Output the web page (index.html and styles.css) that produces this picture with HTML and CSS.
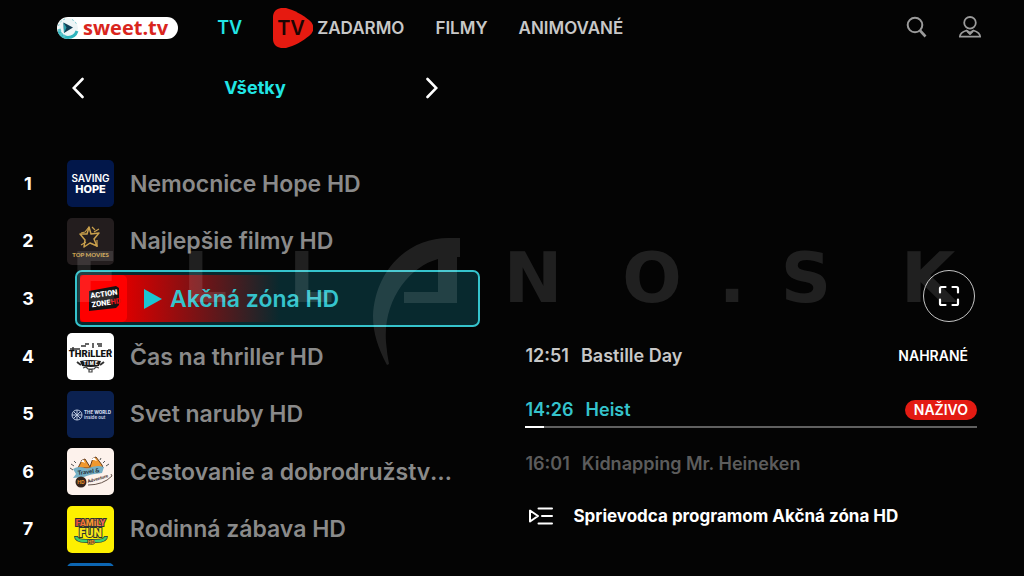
FILE: index.html
```html
<!DOCTYPE html>
<html lang="sk">
<head>
<meta charset="utf-8">
<meta name="viewport" content="width=device-width, initial-scale=1">
<title>sweet.tv</title>
<link rel="stylesheet" href="styles.css">
</head>
<body>
<header class="header">
  <a class="brand" href="#" aria-label="sweet.tv">
    <svg class="brand-disc" viewBox="0 0 22 22" aria-hidden="true">
      <circle cx="11" cy="11" r="10" fill="#eef5f6"/>
      <path d="M2 14a9.500 9.500 0 0 0 18 0" fill="none" stroke="#2fb4bd" stroke-width="3"/>
      <path d="M1.500 9A9.500 9.500 0 0 1 8 2M15 2.500a9.500 9.500 0 0 1 5 6" fill="none" stroke="#7dcdd2" stroke-width="1" stroke-dasharray="2 2"/>
      <path d="M2 12l2 5 4 3" fill="none" stroke="#57c4ca" stroke-width="3" stroke-dasharray="3 1"/>
      <path d="M6.500 5.500l9.500 5-9 5.500z" fill="#103e55"/>
      <path d="M6.500 5.500l3 5-2.500 5.500z" fill="#2a9eaa"/>
    </svg>
    <span class="brand-name">sweet.tv</span>
  </a>
  <nav class="menu">
    <a class="menu-link menu-link-active" href="#">TV</a>
    <a class="menu-link menu-free" href="#">
      <span class="free-badge">
        <svg class="free-shape" viewBox="0 0 40 40" aria-hidden="true">
          <path d="M0 9C0 2 6-1 13 0c8 2 17 7 23 12 6 5 6 11 0 16-6 5-15 10-23 12C6 41 0 38 0 31z" fill="#e61a10"/>
        </svg>
        <span class="free-text">TV</span>
      </span>
      <span>ZADARMO</span>
    </a>
    <a class="menu-link" href="#">FILMY</a>
    <a class="menu-link" href="#">ANIMOVANÉ</a>
  </nav>
  <div class="tools">
    <button class="icon-button" type="button" aria-label="Hľadať">
      <svg class="tool-icon" viewBox="0 0 24 24" fill="none" stroke="#9b9b9b" stroke-width="2">
        <circle cx="10" cy="9" r="7.300"/><path d="M15 14.500l5.500 6" stroke-width="2.600"/>
      </svg>
    </button>
    <button class="icon-button" type="button" aria-label="Profil">
      <svg class="tool-icon" viewBox="0 0 24 24" fill="none" stroke="#9b9b9b" stroke-width="1.800" stroke-linejoin="round">
        <circle cx="12" cy="6.800" r="5.800"/>
        <path d="M8.500 14.500C5 15.500 2 17.500 1.800 20.700h20.400c-.2-3.200-3.200-5.200-6.700-6.200L12 16.800z"/>
        <path d="M9 15l3 3 3-3"/>
      </svg>
    </button>
  </div>
</header>

<div class="category">
  <button class="icon-button" type="button" aria-label="Predchádzajúca kategória">
    <svg class="chevron" viewBox="0 0 12 22" fill="none" stroke="#fff" stroke-width="2.600" stroke-linecap="round"><path d="M10.500 2L1.700 11l8.800 9"/></svg>
  </button>
  <span class="category-name">Všetky</span>
  <button class="icon-button" type="button" aria-label="Ďalšia kategória">
    <svg class="chevron" viewBox="0 0 12 22" fill="none" stroke="#fff" stroke-width="2.600" stroke-linecap="round"><path d="M1.500 2l8.800 9-8.800 9"/></svg>
  </button>
</div>

<main class="content">
  <ol class="channels">
    <li class="row">
      <span class="number">1</span>
      <button class="channel" type="button">
        <svg class="tile" viewBox="0 0 47 47" aria-hidden="true">
          <rect width="47" height="47" fill="#02174a"/>
          <text class="tile-hope" x="23.500" y="22" font-size="10" font-weight="600">SAVING</text>
          <text class="tile-hope" x="23.500" y="33" font-size="11" font-weight="800">HOPE</text>
        </svg>
        <span class="name">Nemocnice Hope HD</span>
      </button>
    </li>
    <li class="row">
      <span class="number">2</span>
      <button class="channel" type="button">
        <svg class="tile" viewBox="0 0 47 47" aria-hidden="true">
          <rect width="47" height="47" fill="#231d1e"/>
          <g fill="none" stroke="#c9a04c" stroke-width="1.500" stroke-linejoin="round">
            <path d="M22 9l2 7 8-1-5 6 3 7-7-3-6 4 1-7-5-6 7 0z"/>
            <path d="M22 9l-4 5-4 1M32 11l-5 3M30 29l0-7M14 27l5-3M25 9l3 3" stroke-width="1.200"/>
          </g>
          <text x="23.500" y="39" fill="#c9a04c" font-family="Lato" font-size="6" font-weight="900" text-anchor="middle">TOP MOVIES</text>
        </svg>
        <span class="name">Najlepšie filmy HD</span>
      </button>
    </li>
    <li class="row">
      <span class="number">3</span>
      <button class="channel channel-selected" type="button" aria-current="true">
        <svg class="tile" viewBox="0 0 47 47" aria-hidden="true">
          <rect width="47" height="47" fill="#fe0000"/>
          <path d="M9 16l27-5 3 2v17l-3 3-27 3z" fill="#151314"/>
          <g transform="rotate(-8 24 24)" font-family="Roboto" font-weight="900" font-size="7.500">
            <text x="11" y="21.500" fill="#fff">ACTION</text>
            <text x="11" y="30.500" fill="#fff">ZONE<tspan fill="#e0161b">HD</tspan></text>
          </g>
        </svg>
        <svg class="play" viewBox="0 0 18 20" aria-hidden="true"><path d="M0 0l18 10L0 20z" fill="#1bc6d2"/></svg>
        <span class="name">Akčná zóna HD</span>
      </button>
    </li>
    <li class="row">
      <span class="number">4</span>
      <button class="channel" type="button">
        <svg class="tile" viewBox="0 0 47 47" aria-hidden="true">
          <rect width="47" height="47" fill="#fff"/>
          <text x="23.500" y="24" fill="#111" font-family="Roboto" font-size="9.500" font-weight="900" text-anchor="middle">THRiLLER</text>
          <path d="M3 16h10M6 14v3M14 13h5M18 11h4M26 10v5M30 11h5M31 13h4M41 17h3" stroke="#333" stroke-width="1.500"/>
          <path d="M13 28q10-2 21 0l-2 5q-8 2-17 0z" fill="#191919"/>
          <path d="M10 29l4 3M37 29l-4 3" stroke="#333" stroke-width="2"/>
          <text x="23.500" y="32" fill="#fff" font-family="Roboto" font-size="4.500" font-weight="900" text-anchor="middle">T I M E</text>
          <path d="M16 35l3-1 2 2h6l2-2 3 1M22 37l3-1v3h-3z" fill="none" stroke="#444" stroke-width="1.200"/>
        </svg>
        <span class="name">Čas na thriller HD</span>
      </button>
    </li>
    <li class="row">
      <span class="number">5</span>
      <button class="channel" type="button">
        <svg class="tile" viewBox="0 0 47 47" aria-hidden="true">
          <rect width="47" height="47" fill="#0b2150"/>
          <g fill="none" stroke="#b9c6de" stroke-width="1"><circle cx="10" cy="24" r="5"/><path d="M5 24h10M10 19v10M6.500 20.500l7 7M13.500 20.500l-7 7"/></g>
          <g fill="#ced7e8" font-family="Inter" font-size="4.500"><text x="17" y="23" font-weight="800">THE WORLD</text><text x="17" y="28">inside out</text></g>
        </svg>
        <span class="name">Svet naruby HD</span>
      </button>
    </li>
    <li class="row">
      <span class="number">6</span>
      <button class="channel" type="button">
        <svg class="tile" viewBox="0 0 47 47" aria-hidden="true">
          <rect width="47" height="47" fill="#fdf2ec"/>
          <path d="M11 20l4-8 3-1 5 8 3-9 3-1 6 8 1 3z" fill="#f0982e" stroke="#633c20" stroke-width="1"/>
          <path d="M14 14l2-3 2 4-2-1zM24 12l3-3 3 4-3-1z" fill="#fff"/>
          <path d="M6 21q6-4 14 0 9-5 17-2l-2 6q-12 1-18 4l-11 1 3-4z" fill="#75afc5"/>
          <path d="M3 20l3 2M4 16l3 2M7 13l2 2M36 15l2-2M39 18l3-2M33 12l1-2" stroke="#555" stroke-width="1"/>
          <text x="11" y="27" transform="rotate(-7 11 27)" fill="#25313a" font-family="Lato" font-size="6" font-weight="900">Travel &amp;</text>
          <circle cx="14" cy="34" r="5.500" fill="#35231a"/>
          <text x="14" y="36" fill="#ec942a" font-family="Inter" font-size="5" font-weight="700" text-anchor="middle">HD</text>
          <text x="21" y="35" transform="rotate(-16 21 35)" fill="#35231a" font-family="Lato" font-size="4.500" font-weight="900">Adventure</text>
          <path d="M21 37q15 0 24-9l-1-2" fill="none" stroke="#66544b" stroke-width="1"/>
        </svg>
        <span class="name">Cestovanie a dobrodružstvo HD</span>
      </button>
    </li>
    <li class="row">
      <span class="number">7</span>
      <button class="channel" type="button">
        <svg class="tile" viewBox="0 0 47 47" aria-hidden="true">
          <defs><linearGradient id="family"><stop offset="0" stop-color="#ef453c"/><stop offset=".5" stop-color="#f9a02c"/><stop offset="1" stop-color="#ef5b64"/></linearGradient></defs>
          <rect width="47" height="47" fill="#fdf000"/>
          <path d="M9 30q0 5 10 5h10q10 0 10-5" fill="none" stroke="#36483c" stroke-width="4"/>
          <path d="M9 31q1 4 10 4h10q9 0 10-4" fill="none" stroke="#3ed06e" stroke-width="2.500"/>
          <g font-family="Roboto" font-weight="900" stroke="#2d3430" stroke-width="2" paint-order="stroke" text-anchor="middle">
            <text x="23.500" y="20" fill="url(#family)" font-size="9">FAMiLY</text>
            <text x="23.500" y="31" fill="#f6e51c" font-size="12">FUN</text>
            <text x="24" y="38" fill="#f59b25" font-size="5" stroke-width="1">HD</text>
          </g>
        </svg>
        <span class="name">Rodinná zábava HD</span>
      </button>
    </li>
    <li class="row">
      <span class="number"></span>
      <button class="channel" type="button" aria-label="Ďalší kanál">
        <svg class="tile" viewBox="0 0 47 47" aria-hidden="true"><rect width="47" height="47" fill="#0d66b2"/></svg>
      </button>
    </li>
  </ol>

  <section class="guide">
    <button class="fullscreen" type="button" aria-label="Celá obrazovka">
      <svg class="fullscreen-icon" viewBox="0 0 22 22" fill="none" stroke="#fff" stroke-width="2.200" stroke-linecap="round" stroke-linejoin="round">
        <path d="M2 7.500V3.500Q2 2 3.500 2h4M14.500 2h4Q20 2 20 3.500v4M20 14.500v4q0 1.500-1.500 1.500h-4M7.500 20h-4Q2 20 2 18.500v-4"/>
      </svg>
    </button>
    <ul class="programs">
      <li class="program">
        <div class="program-line"><time>12:51</time><span>Bastille Day</span><span class="recorded">NAHRANÉ</span></div>
      </li>
      <li class="program program-live">
        <div class="program-line"><time>14:26</time><span>Heist</span><span class="live">NAŽIVO</span></div>
        <div class="progress" role="progressbar" aria-label="Heist" aria-valuemin="0" aria-valuemax="100" aria-valuenow="4"><div class="progress-value" style="width: 4%"></div></div>
      </li>
      <li class="program program-next">
        <div class="program-line"><time>16:01</time><span>Kidnapping Mr. Heineken</span></div>
      </li>
    </ul>
    <a class="guide-link" href="#">
      <svg class="guide-icon" viewBox="0 0 24 18" fill="none" stroke="#fff" stroke-width="2" stroke-linecap="round" stroke-linejoin="round">
        <path d="M1 3.500v11l8-5.500zM9.500 1.500H23M13 9h10M9.500 16.500H23"/>
      </svg>
      <span>Sprievodca programom Akčná zóna HD</span>
    </a>
  </section>
</main>

<div class="watermark" aria-hidden="true">
  <span>E</span><span>L</span><span>L</span>
  <svg class="swoosh" viewBox="0 0 90 128">
    <path d="M87 0v19h-3v46H31V54h34V21C36 29 10 62 13 104q1 12 3 22l-2 1C5 110 0 95 0 78 2 34 33 0 76 0z"/>
  </svg>
  <span>N</span><span>O</span><span>.</span><span>S</span><span>K</span>
</div>
</body>
</html>
```
FILE: styles.css
```css
* {
  box-sizing: border-box;
}

body {
  display: flex;
  flex-direction: column;
  height: 100vh;
  margin: 0;
  overflow: hidden;
  background: #040404;
  color: #fff;
  font-family: Inter, "Liberation Sans", sans-serif;
  font-size: 18px;
  font-weight: 600;
  line-height: 24px;
}

a {
  color: inherit;
  text-decoration: none;
}

button {
  padding: 0;
  border: 0;
  background: none;
  color: inherit;
  font: inherit;
  text-align: left;
  cursor: pointer;
}

svg {
  display: block;
  flex: none;
}

ol,
ul {
  margin: 0;
  padding: 0;
  list-style: none;
}

.header {
  display: flex;
  flex: none;
  align-items: center;
  height: 55px;
  padding: 0 42px 0 57px;
}

.brand {
  display: flex;
  align-items: center;
  gap: 4px;
  height: 22px;
  padding-right: 10px;
  border-radius: 11px;
  background: #fff;
}

.brand-disc {
  width: 22px;
  height: 22px;
}

.brand-name {
  color: #d9251d;
  font-family: "Open Sans", sans-serif;
  font-size: 20px;
  font-weight: 700;
  line-height: 22px;
}

.menu {
  display: flex;
  align-items: center;
  gap: 31px;
  margin-left: 39px;
  color: #c8c8c8;
  font-size: 17px;
}

.menu-link-active {
  color: #21e6e6;
  font-size: 18px;
}

.menu-free {
  display: flex;
  align-items: center;
  gap: 4px;
}

.free-badge {
  display: grid;
  align-items: center;
}

.free-shape,
.free-text {
  grid-area: 1 / 1;
}

.free-shape {
  width: 40px;
  height: 40px;
}

.free-text {
  padding-left: 4px;
  color: #1c0503;
  font-size: 20px;
}

.tools {
  display: flex;
  gap: 29px;
  margin-left: auto;
}

.tool-icon {
  width: 24px;
  height: 24px;
}

.category {
  display: flex;
  flex: none;
  align-items: center;
  justify-content: space-between;
  width: 366px;
  height: 66px;
  margin: 0 0 34px 72px;
}

.category-name {
  color: #21e6e6;
  font-weight: 700;
}

.chevron {
  width: 12px;
  height: 22px;
}

.content {
  display: grid;
  flex: 1;
  grid-template-columns: minmax(0, 481fr) minmax(0, 452fr);
  gap: 45px;
  min-height: 0;
  padding: 0 47px 10px 0;
}

.channels {
  display: grid;
  grid-auto-rows: 10vh;
  min-height: 0;
  overflow: hidden;
}

.row {
  display: grid;
  grid-template-columns: 56px minmax(0, 1fr);
  gap: 11px;
  align-items: center;
}

.number {
  font-weight: 700;
  text-align: center;
}

.channel {
  display: flex;
  align-items: center;
  gap: 16px;
  padding-right: 24px;
  color: #8a8a8a;
  font-size: 23px;
  line-height: 32px;
}

.tile {
  width: 47px;
  height: 47px;
  border-radius: 5px;
}

.tile-hope {
  fill: #fff;
  font-family: Inter, sans-serif;
  text-anchor: middle;
}

.name {
  overflow: hidden;
  text-overflow: ellipsis;
  white-space: nowrap;
}

.channel-selected {
  gap: 8px;
  margin-left: 8px;
  padding: 3px;
  border: 2px solid #35c3cc;
  border-radius: 7px;
  background: linear-gradient(90deg, #d80000 48px, #08292e 200px) content-box, #08292e;
  color: #35c3cc;
}

.play {
  width: 18px;
  height: 20px;
  margin-left: 9px;
}

.guide {
  display: flex;
  flex-direction: column;
  padding-top: 20vh;
}

.fullscreen {
  display: grid;
  place-items: center;
  align-self: flex-end;
  width: 52px;
  height: 52px;
  margin-right: 2px;
  border: 1px solid #c4c4c4;
  border-radius: 50%;
}

.fullscreen-icon {
  width: 22px;
  height: 22px;
}

.programs {
  display: grid;
  gap: 24px;
  margin: 22px 0;
  color: #c8c8c8;
}

.program {
  min-height: 30px;
}

.program-line {
  display: flex;
  align-items: center;
  gap: 12px;
}

.recorded,
.live {
  margin-left: auto;
  padding: 0 9px;
  color: #fff;
  font-size: 14px;
  line-height: 20px;
}

.live {
  border-radius: 10px;
  background: #e31b13;
}

.program-live {
  color: #35c3cc;
}

.program-next {
  color: #5c5c5c;
}

.progress {
  margin-top: 4px;
  background: #606060;
}

.progress-value {
  height: 2px;
  background: #fff;
}

.guide-link {
  display: flex;
  align-items: center;
  gap: 20px;
  padding-left: 4px;
  font-size: 17px;
  font-weight: 700;
}

.guide-icon {
  width: 24px;
  height: 18px;
}

/* Translucent overlay across the whole screen. */
.watermark {
  position: absolute;
  top: 238px;
  right: 28px;
  left: 40px;
  display: grid;
  grid-template-columns: 110fr 110fr 102fr 112fr 118fr 120fr 40fr 108fr 136fr;
  justify-items: center;
  color: #fff;
  font-family: "DejaVu Sans", sans-serif;
  font-size: 70px;
  font-weight: 700;
  line-height: 80px;
  opacity: 0.11;
  pointer-events: none;
}

.swoosh {
  width: 90px;
  height: 128px;
  fill: currentColor;
}
```
